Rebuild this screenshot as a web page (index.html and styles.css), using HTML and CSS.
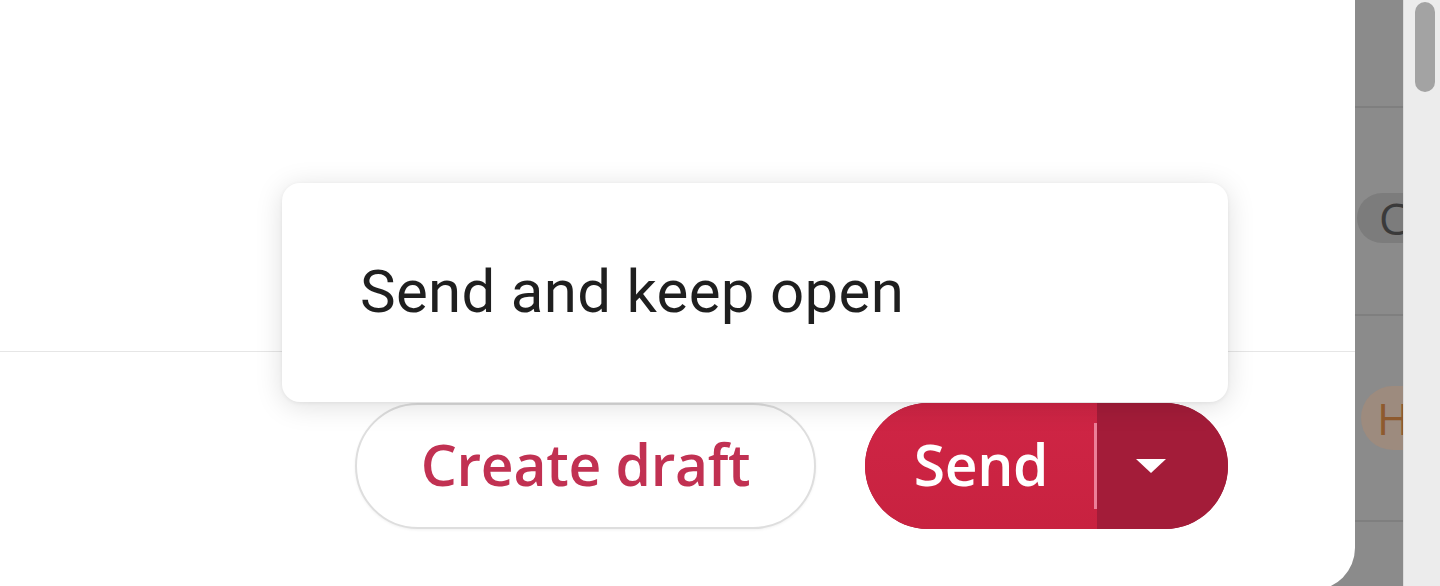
FILE: index.html
```html
<!DOCTYPE html>
<html lang="en">
<head>
<meta charset="utf-8">
<title>Send options</title>
<link rel="stylesheet" href="styles.css">
</head>
<body>
<div class="app">
  <section class="panel">
    <div class="body-area"></div>
    <div class="footer">
      <button class="btn-outline">Create draft</button>
      <div class="send-split">
        <button class="send-main">Send</button>
        <span class="send-divider"></span>
        <button class="send-more" aria-label="More send options">
          <svg width="32" height="16" viewBox="0 0 32 16"><path d="M1 1 L31 1 L16 15 Z" fill="#fff"/></svg>
        </button>
      </div>
    </div>
    <div class="menu">
      <div class="menu-item">Send and keep open</div>
    </div>
  </section>
  <aside class="backdrop">
    <div class="row row-a"></div>
    <div class="row row-b"><span class="chip chip-gray">C</span></div>
    <div class="row row-c"><span class="chip chip-orange">H</span></div>
    <div class="row row-d"></div>
  </aside>
  <div class="scrollbar"><div class="thumb"></div></div>
</div>
</body>
</html>
```

FILE: styles.css
```css
* { box-sizing: border-box; }
html, body { margin: 0; padding: 0; }
body {
  width: 1440px;
  height: 586px;
  overflow: hidden;
  background: #8b8b8b;
  font-family: "Roboto", "Liberation Sans", sans-serif;
}
.app {
  display: flex;
  height: 586px;
}
.panel {
  position: relative;
  width: 1355px;
  height: 590px;
  flex: none;
  background: #fff;
  border-bottom-right-radius: 42px;
  display: flex;
  flex-direction: column;
  z-index: 2;
}
.body-area {
  height: 352px;
  border-bottom: 1.5px solid #e6e6e6;
}
.footer {
  display: flex;
  justify-content: flex-end;
  gap: 49px;
  padding: 51px 127px 0 0;
}
.btn-outline {
  width: 461px;
  height: 126px;
  border: 2px solid #dedede;
  border-radius: 63px;
  background: #fff;
  color: #c13152;
  font-family: "Open Sans", "Liberation Sans", sans-serif;
  font-weight: 600;
  font-size: 57px;
  letter-spacing: -0.3px;
  padding: 0 0 4px 0;
  box-shadow: 0 1px 3px rgba(0,0,0,0.06);
}
.send-split {
  display: flex;
  align-items: center;
  width: 363px;
  height: 126px;
  border-radius: 63px;
  overflow: hidden;
  background: #a31c39;
}
.send-main {
  width: 232px;
  height: 100%;
  border: 0;
  padding: 0 0 4px 0;
  background: linear-gradient(180deg, #cf2545 0%, #c82240 100%);
  color: #fff;
  font-family: "Open Sans", "Liberation Sans", sans-serif;
  font-weight: 600;
  font-size: 57px;
  letter-spacing: -0.4px;
}
.send-divider {
  width: 3px;
  height: 86px;
  background: #ec7f98;
  margin-left: -3px;
  position: relative;
}
.send-more {
  flex: 1;
  height: 100%;
  border: 0;
  background: #a31c39;
  display: flex;
  align-items: center;
  justify-content: center;
  padding: 0 23px 0 0;
}
.menu {
  position: absolute;
  left: 282px;
  top: 183px;
  width: 946px;
  height: 219px;
  background: #fff;
  border-radius: 18px;
  box-shadow: 0 4px 28px rgba(0,0,0,0.13), 0 1px 4px rgba(0,0,0,0.06);
  display: flex;
  align-items: center;
  padding-left: 78px;
}
.menu-item {
  font-family: "Roboto", "Liberation Sans", sans-serif;
  font-size: 60px;
  letter-spacing: 0.3px;
  color: #1f1f1f;
  padding-bottom: 2px;
}
.backdrop {
  width: 48px;
  flex: none;
  background: #8b8b8b;
  position: relative;
  overflow: hidden;
  display: flex;
  flex-direction: column;
}
.row {
  border-bottom: 2px solid #7f7f7f;
  position: relative;
}
.row-a { height: 108px; }
.row-b { height: 208px; }
.row-c { height: 206px; }
.row-d { flex: 1; border-bottom: 0; }
.chip {
  position: absolute;
  left: 2px;
  width: 100px;
  height: 50px;
  border-radius: 25px;
  font-family: "Open Sans", "Liberation Sans", sans-serif;
  font-size: 44px;
  line-height: 50px;
  padding-left: 22px;
}
.chip-gray {
  top: 85px;
  background: #7c7c7c;
  color: #3a3a3a;
}
.chip-orange {
  left: 6px;
  top: 70px;
  height: 64px;
  line-height: 64px;
  border-radius: 32px;
  padding-left: 16px;
  background: #9d8b7e;
  color: #8e5a2e;
}
.scrollbar {
  flex: 1;
  background: #ececec;
  border-left: 1px solid #dcdcdc;
  position: relative;
}
.thumb {
  position: absolute;
  left: 11px;
  top: 2px;
  width: 20px;
  height: 90px;
  border-radius: 10px;
  background: #a3a3a3;
}
```
